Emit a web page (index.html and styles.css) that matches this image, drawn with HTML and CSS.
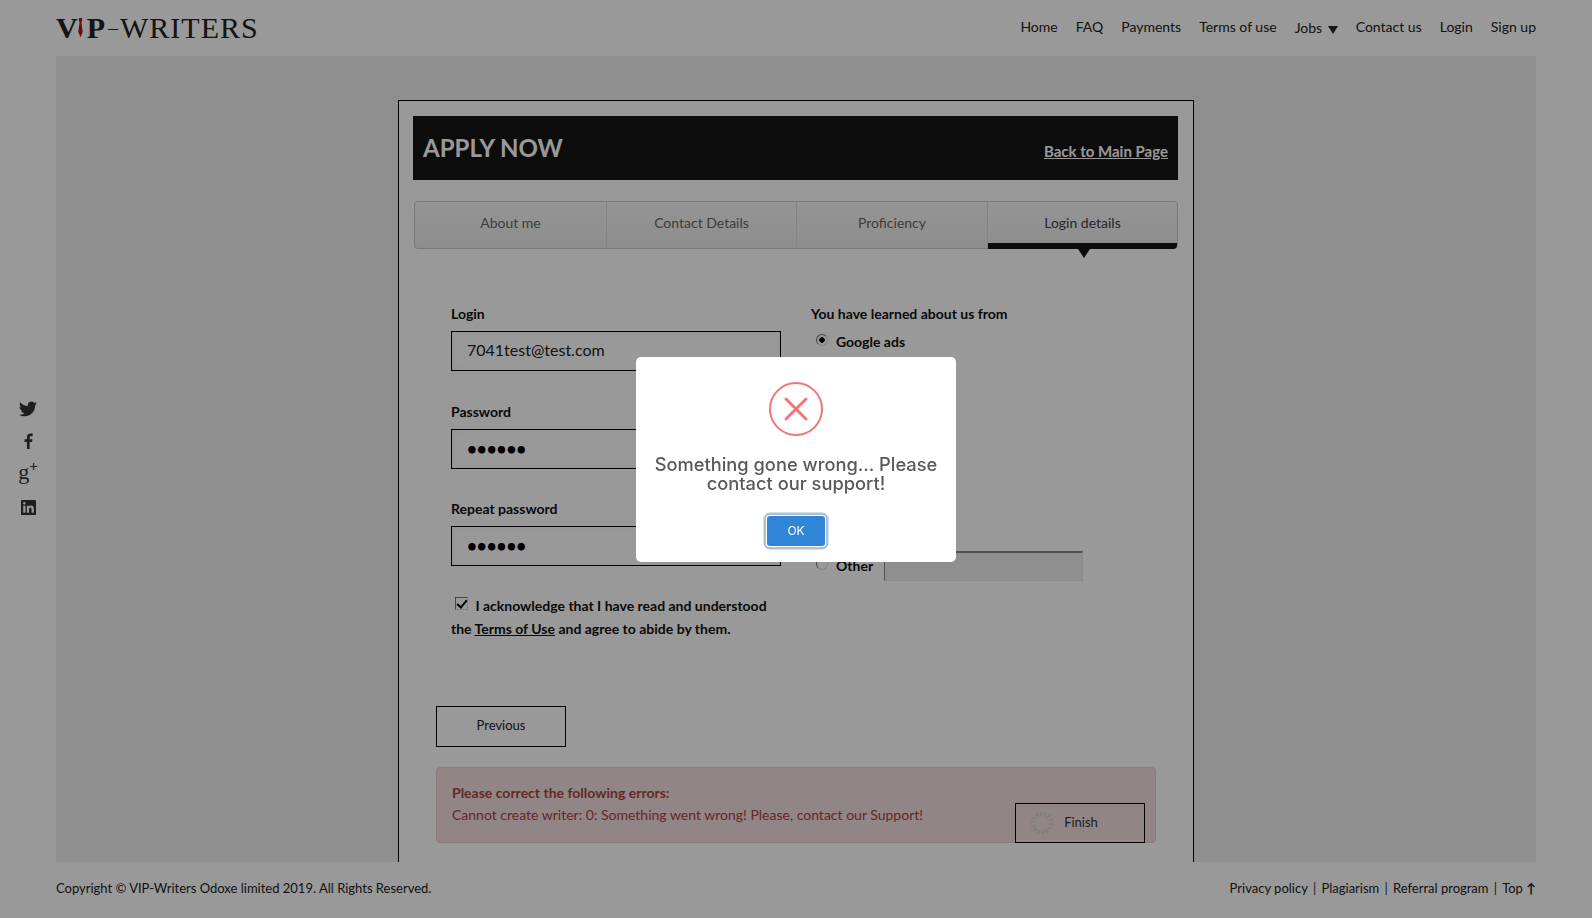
FILE: index.html
```html
<!DOCTYPE html>
<html lang="en">
<head>
    <meta charset="UTF-8">
    <meta name="viewport" content="width=device-width, initial-scale=1.0">
    <title>Apply Now - VIP-Writers</title>
    <link rel="stylesheet" href="styles.css">
</head>
<body>
    <header class="topbar">
        <a class="logo" href="#">
            <span class="logo-bold">V</span>
            <svg class="logo-tie" viewBox="0 0 8 22" width="7" height="21"><path d="M2.500 0h3l.5 3-1 2 1.500 11L4 22 1.500 16 3 5 2 3z" fill="#b3121d"/></svg>
            <span class="logo-bold">P</span><span class="logo-dash">–</span><span class="logo-rest">WRITERS</span>
        </a>
        <nav class="topnav">
            <a href="#">Home</a>
            <a href="#">FAQ</a>
            <a href="#">Payments</a>
            <a href="#">Terms of use</a>
            <a class="jobs" href="#">Jobs <span class="caret"></span></a>
            <a href="#">Contact us</a>
            <a href="#">Login</a>
            <a href="#">Sign up</a>
        </nav>
    </header>

    <aside class="social">
        <svg viewBox="0 0 24 24" width="18" height="18"><path d="M23.953 4.570a10 10 0 01-2.825.775 4.958 4.958 0 002.163-2.723c-.951.555-2.005.959-3.127 1.184a4.920 4.920 0 00-8.384 4.482C7.690 8.095 4.067 6.130 1.640 3.162a4.822 4.822 0 00-.666 2.475c0 1.710.870 3.213 2.188 4.096a4.904 4.904 0 01-2.228-.616v.060a4.923 4.923 0 003.946 4.827 4.996 4.996 0 01-2.212.085 4.936 4.936 0 004.604 3.417 9.867 9.867 0 01-6.102 2.105c-.390 0-.779-.023-1.170-.067a13.995 13.995 0 007.557 2.209c9.053 0 13.998-7.496 13.998-13.985 0-.210 0-.420-.015-.630A9.935 9.935 0 0024 4.590z"/></svg>
        <svg viewBox="0 0 24 24" width="16" height="16"><path d="M14.500 24V13.500h3.600l.6-4.200h-4.200V6.700c0-1.200.4-2 2.100-2H19V1c-.4-.1-1.700-.2-3.200-.2-3.200 0-5.400 1.900-5.400 5.500v3H6.800v4.200h3.600V24z"/></svg>
        <span class="gplus">g<sup>+</sup></span>
        <svg viewBox="0 0 24 24" width="15" height="15"><path d="M20.447 20.452h-3.554v-5.569c0-1.328-.027-3.037-1.852-3.037-1.853 0-2.136 1.445-2.136 2.939v5.667H9.351V9h3.414v1.561h.046c.477-.9 1.637-1.850 3.370-1.850 3.601 0 4.267 2.370 4.267 5.455v6.286zM5.337 7.433c-1.144 0-2.063-.926-2.063-2.065 0-1.138.92-2.063 2.063-2.063 1.140 0 2.064.925 2.064 2.063 0 1.139-.925 2.065-2.064 2.065zm1.782 13.019H3.555V9h3.564v11.452zM22.225 0H1.771C.792 0 0 .774 0 1.729v20.542C0 23.227.792 24 1.771 24h20.451C23.200 24 24 23.227 24 22.271V1.729C24 .774 23.200 0 22.222 0h.003z"/></svg>
    </aside>

    <main class="content">
        <section class="card">
            <div class="card-head">
                <h1>APPLY NOW</h1>
                <a href="#">Back to Main Page</a>
            </div>

            <div class="tabs">
                <div class="tab tab-1">About me</div>
                <div class="tab tab-2">Contact Details</div>
                <div class="tab tab-3">Proficiency</div>
                <div class="tab tab-4 active">Login details</div>
            </div>

            <form class="form-grid">
                <div class="col-left">
                    <label for="login">Login</label>
                    <input class="text-input" type="text" id="login" value="7041test@test.com">

                    <label for="password">Password</label>
                    <input class="text-input" type="password" id="password" value="123456">

                    <label for="repeat">Repeat password</label>
                    <input class="text-input" type="password" id="repeat" value="123456">

                    <p class="ack">
                        <input class="check" type="checkbox" checked>
                        I acknowledge that I have read and understood<br>
                        the <a href="#">Terms of Use</a> and agree to abide by them.
                    </p>
                </div>
                <div class="col-right">
                    <label>You have learned about us from</label>
                    <div class="radio-row"><input class="radio" type="radio" name="source" checked> Google ads</div>
                    <div class="radio-row radio-other"><input class="radio" type="radio" name="source"> Other <input class="other-input" type="text"></div>
                </div>
            </form>

            <button class="btn btn-prev" type="button">Previous</button>

            <div class="error-box">
                <div class="error-text">
                    <strong>Please correct the following errors:</strong><br>
                    Cannot create writer: 0: Something went wrong! Please, contact our Support!
                </div>
                <button class="btn btn-finish" type="button">
                    <svg class="spinner" viewBox="0 0 24 24" width="24" height="24"><circle cx="12" cy="12" r="9" fill="none" stroke="#d6d6d6" stroke-width="4.500" stroke-dasharray="2.500 1.500"/></svg>
                    Finish
                </button>
            </div>
        </section>
    </main>

    <footer class="footer">
        <span>Copyright © VIP-Writers Odoxe limited 2019. All Rights Reserved.</span>
        <span class="footer-links">
            <a href="#">Privacy policy</a><i>|</i><a href="#">Plagiarism</a><i>|</i><a href="#">Referral program</a><i>|</i><a href="#">Top <b>↑</b></a>
        </span>
    </footer>

    <div class="overlay">
        <div class="modal">
            <svg class="modal-icon" viewBox="0 0 54 54" width="54" height="54">
                <circle cx="27" cy="27" r="26" fill="none" stroke="#f27474" stroke-width="2"/>
                <path d="M17 17l20 20M37 17L17 37" fill="none" stroke="#f27474" stroke-width="3" stroke-linecap="round"/>
            </svg>
            <h2>Something gone wrong... Please contact our support!</h2>
            <button class="btn-ok" type="button">OK</button>
        </div>
    </div>
</body>
</html>
```

FILE: styles.css
```css
* {
    box-sizing: border-box;
}
html, body {
    height: 100%;
}
body {
    margin: 0;
    overflow: hidden;
    font-family: "Lato", "Liberation Sans", sans-serif;
    font-size: 14px;
    color: #222;
    background-color: #fff;
}
a {
    color: inherit;
    text-decoration: none;
}

.topbar {
    height: 56px;
    padding: 0 56px 4px;
    display: flex;
    align-items: center;
    justify-content: space-between;
}
.logo {
    display: flex;
    align-items: center;
    height: 30px;
    margin-top: 3px;
    font-family: "Liberation Serif", serif;
    font-size: 30px;
    line-height: 30px;
    color: #222;
}
.logo-bold {
    font-weight: bold;
}
.logo-tie {
    margin: 0 3px 0 -1px;
}
.logo-dash {
    margin: 0 2px 0 3px;
    font-size: 20px;
}
.logo-rest {
    letter-spacing: 1px;
}
.topnav {
    display: flex;
    gap: 18px;
    color: #222;
}
.jobs {
    position: relative;
    top: 1px;
}
.caret {
    display: inline-block;
    margin-left: 2px;
    border-left: 5px solid transparent;
    border-right: 5px solid transparent;
    border-top: 8px solid #222;
    vertical-align: -1px;
}

.social {
    position: absolute;
    left: 18px;
    top: 400px;
    width: 20px;
    display: flex;
    flex-direction: column;
    align-items: center;
    gap: 15px;
    fill: #333;
}
.gplus {
    height: 17px;
    margin-bottom: 4px;
    font-family: "Liberation Serif", serif;
    font-size: 22px;
    line-height: 15px;
    color: #333;
}
.gplus sup {
    font-size: 15px;
    font-weight: bold;
    line-height: 0;
}

.content {
    height: 806px;
    padding-top: 44px;
    margin: 0 56px;
    overflow: hidden;
    background-color: #eee;
}
.card {
    width: 796px;
    height: 900px;
    margin: 0 auto;
    padding: 15px 15px 0 14px;
    border: 1px solid #000;
    background-color: #fff;
}
.card-head {
    height: 64px;
    padding: 0 10px;
    display: flex;
    justify-content: space-between;
    background-color: #151515;
    color: #fff;
}
.card-head h1 {
    margin: 17px 0 0;
    font-size: 24px;
    line-height: 30px;
    font-weight: bold;
}
.card-head a {
    margin-top: 25px;
    font-size: 15px;
    line-height: 20px;
    font-weight: bold;
    text-decoration: underline;
}

.tabs {
    margin: 21px 0 0 1px;
    height: 48px;
    display: flex;
    border: 1px solid #ccc;
    border-radius: 4px;
    background: linear-gradient(#f8f8f8, #ebebeb);
}
.tab {
    display: flex;
    align-items: center;
    justify-content: center;
    padding-bottom: 5px;
    color: #666;
    border-right: 1px solid #dcdcdc;
}
.tab-1 {
    width: 192px;
}
.tab-2 {
    width: 190px;
}
.tab-3 {
    width: 191px;
}
.tab-4 {
    flex: 1;
    border-right: none;
}
.tab.active {
    position: relative;
    margin-bottom: -1px;
    padding-bottom: 1px;
    color: #444;
    border-bottom: 6px solid #151515;
    border-bottom-right-radius: 4px;
}
.tab.active::after {
    content: "";
    position: absolute;
    left: 90px;
    bottom: -15px;
    border-left: 6px solid transparent;
    border-right: 6px solid transparent;
    border-top: 9px solid #151515;
}

.form-grid {
    display: flex;
    padding: 55px 0 0 38px;
    color: #111;
}
.col-left {
    width: 360px;
}
.col-left label, .col-right label {
    display: block;
    height: 20px;
    line-height: 20px;
    margin-bottom: 7px;
    font-weight: 700;
}
.text-input {
    display: block;
    width: 330px;
    height: 40px;
    padding: 0 15px 3px;
    margin-bottom: 30.5px;
    border: 1px solid #000;
    border-radius: 0;
    background: #fff;
    box-shadow: inset 0 0 6px rgba(0, 0, 0, 0.05);
    font-family: "Lato", sans-serif;
    font-size: 16px;
    color: #222;
}
.text-input[type="password"] {
    padding-bottom: 1px;
    font-size: 17px;
    font-weight: bold;
    color: #000;
}
.ack {
    margin: -3px 0 0;
    line-height: 23px;
    font-weight: 700;
}
.ack a {
    text-decoration: underline;
}
.check {
    appearance: none;
    position: relative;
    width: 13px;
    height: 13px;
    margin: 0 4px 0 4px;
    vertical-align: 1px;
    border: 1px solid;
    border-color: #777 #ddd #ddd #777;
    background: #fff;
}
.check:checked::after {
    content: "";
    position: absolute;
    left: 3px;
    top: 0;
    width: 4px;
    height: 8px;
    border: solid #000;
    border-width: 0 2px 2px 0;
    transform: rotate(40deg);
}
.radio-row {
    height: 20px;
    line-height: 20px;
    margin-top: 8px;
    font-weight: 700;
    display: flex;
    align-items: center;
    gap: 8px;
}
.radio {
    appearance: none;
    width: 12px;
    height: 12px;
    margin: -4px 0 0 5px;
    border: 1px solid;
    border-color: #777 #ddd #ddd #777;
    border-radius: 50%;
    background: #fff;
}
.radio:checked {
    background: radial-gradient(circle, #000 0, #000 2.500px, #fff 3px);
}
.radio-other {
    margin-top: 204px;
}
.other-input {
    width: 199px;
    height: 30px;
    margin-top: -1px;
    margin-left: 3px;
    border: 1px solid #e6e6e6;
    border-top: 2px solid #888;
    border-left: 1px solid #888;
    background-color: #eee;
}

.btn {
    width: 130px;
    border: 1px solid #000;
    border-radius: 0;
    background: transparent;
    font-family: "Lato", sans-serif;
    font-size: 13px;
    color: #222;
}
.btn-prev {
    display: block;
    height: 41px;
    padding-bottom: 3px;
    margin: 66px 0 0 23px;
}
.error-box {
    width: 720px;
    height: 76px;
    margin: 20px 0 0 23px;
    padding: 0 10px 0 15px;
    display: flex;
    justify-content: space-between;
    align-items: flex-end;
    border: 1px solid #ebccd1;
    border-radius: 4px;
    background-color: #f2dede;
    color: #a94442;
}
.error-text {
    align-self: flex-start;
    margin-top: 14px;
    line-height: 22px;
}
.btn-finish {
    position: relative;
    height: 40px;
    margin-bottom: -1px;
    padding: 0 0 2px 2px;
    color: #333;
}
.spinner {
    position: absolute;
    left: 14px;
    top: 7px;
}

.footer {
    height: 56px;
    padding: 0 56px 4px;
    display: flex;
    align-items: center;
    justify-content: space-between;
    font-size: 13px;
    color: #222;
}
.footer-links i {
    margin: 0 5.200px;
    font-style: normal;
    color: #135;
}

.overlay {
    position: fixed;
    top: 0;
    left: 0;
    right: 0;
    bottom: 0;
    display: flex;
    align-items: center;
    justify-content: center;
    background: rgba(0, 0, 0, 0.4);
}
.modal {
    width: 320px;
    height: 205px;
    padding-top: 25px;
    display: flex;
    flex-direction: column;
    align-items: center;
    border-radius: 5px;
    background-color: #fff;
}
.modal h2 {
    margin: 19px 0 0;
    font-family: "Inter", sans-serif;
    font-size: 18.300px;
    line-height: 19px;
    font-weight: 500;
    text-align: center;
    color: #595959;
}
.btn-ok {
    width: 58px;
    height: 30px;
    margin-top: 23px;
    border: none;
    border-radius: 3px;
    background-color: #3085d6;
    box-shadow: 0 0 0 1px #fff, 0 0 0 3.500px rgba(50, 100, 150, 0.4);
    font-family: "Inter", sans-serif;
    font-size: 12px;
    color: #fff;
}
```
